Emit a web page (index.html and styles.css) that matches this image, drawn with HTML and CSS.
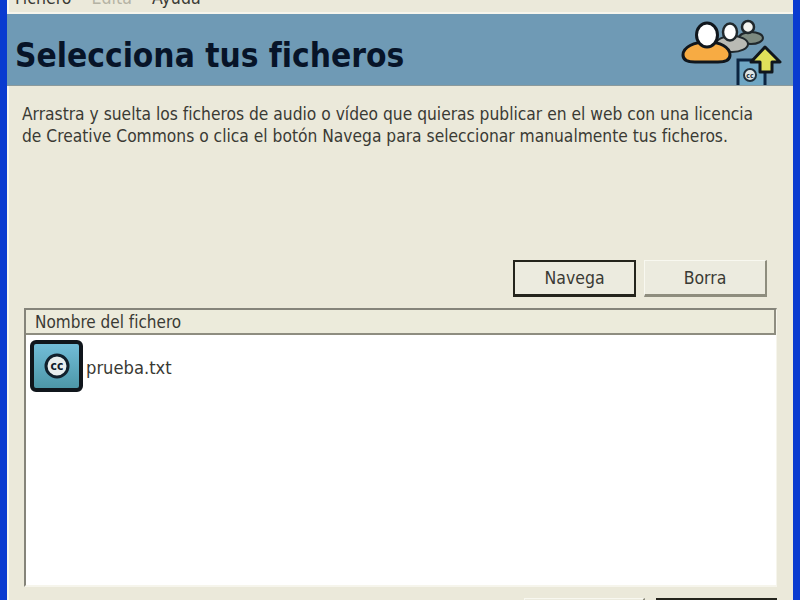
FILE: index.html
```html
<!DOCTYPE html>
<html lang="es">
<head>
  <meta charset="UTF-8">
  <meta name="viewport" content="width=device-width, initial-scale=1">
  <title>Selecciona tus ficheros</title>
  <link rel="stylesheet" href="styles.css">
</head>
<body>
  <div class="window">
    <nav class="menu">
      <span class="menu-item">Fichero</span>
      <span class="menu-item disabled">Edita</span>
      <span class="menu-item">Ayuda</span>
    </nav>
    <header class="banner">
      <h1>Selecciona tus ficheros</h1>
      <svg class="banner-icon" width="108" height="71" viewBox="0 0 108 71">
        <!-- back person -->
        <ellipse cx="73" cy="24" rx="12" ry="6" fill="#7d8a80" stroke="#20282c" stroke-width="2"/>
        <circle cx="70" cy="13" r="6" fill="#f4f4f0" stroke="#20282c" stroke-width="2.5"/>
        <!-- middle person -->
        <ellipse cx="54" cy="30" rx="16" ry="8" fill="#b9bab4" stroke="#20282c" stroke-width="2"/>
        <ellipse cx="52" cy="18" rx="7" ry="8.5" fill="#fff" stroke="#20282c" stroke-width="2.5"/>
        <!-- front person -->
        <path d="M5 41c0-8 11-13 24-13s23 5 23 13c0 6-6 7-12 7H17c-6 0-12-1-12-7z" fill="#f7ab43" stroke="#10161c" stroke-width="3"/>
        <ellipse cx="29" cy="21" rx="10.5" ry="12" fill="#fff" stroke="#10161c" stroke-width="3"/>
        <!-- document with cc mark -->
        <path d="M60 71V46h27v25" fill="#6fa7c4" stroke="#0c2440" stroke-width="3"/>
        <circle cx="72" cy="61" r="6" fill="#dfe6e6" stroke="#20303c" stroke-width="2"/>
        <text class="cc-small" x="72" y="63.5">cc</text>
        <!-- arrow -->
        <path d="M87 33l15 15H94v10H82V48H73z" fill="#dfe05a" stroke="#10161c" stroke-width="3" stroke-linejoin="round"/>
      </svg>
    </header>
    <main class="content">
      <p class="intro">Arrastra y suelta los ficheros de audio o vídeo que quieras publicar en el web con una licencia<br>de Creative Commons o clica el botón Navega para seleccionar manualmente tus ficheros.</p>
      <div class="actions">
        <button class="btn default">Navega</button>
        <button class="btn">Borra</button>
      </div>
      <section class="list">
        <div class="list-head">Nombre del fichero</div>
        <div class="list-body">
          <div class="file">
            <span class="file-icon">
              <svg width="30" height="30" viewBox="0 0 30 30">
                <circle cx="15" cy="15" r="11" fill="#e8eeee" stroke="#10202c" stroke-width="3"/>
                <text class="cc-big" x="15" y="19">cc</text>
              </svg>
            </span>
            <span class="file-name">prueba.txt</span>
          </div>
        </div>
      </section>
      <div class="footer-actions">
        <button class="btn low"></button>
        <button class="btn low default"></button>
      </div>
    </main>
  </div>
</body>
</html>
```

FILE: styles.css
```css
html, body { margin: 0; padding: 0; height: 100%; overflow: hidden; }
body { background: #0a3bd0; font-family: "DejaVu Sans Condensed", "DejaVu Sans", sans-serif; color: #3a3a34; }

.window { margin: 0 7px; height: 600px; background: #ebe9da; overflow: hidden; box-shadow: inset 2px 0 #f6f6ee; }

.menu { height: 12px; display: flex; align-items: flex-end; padding-left: 8px; gap: 20px; overflow: hidden; border-bottom: 2px solid #f6f5ec; font-size: 17.6px; line-height: 12px; }
.menu-item { position: relative; top: -8px; }
.menu-item.disabled { color: #b5b3a4; }

.banner { height: 71px; background: #6f9ab5; display: flex; align-items: center; justify-content: space-between; padding: 0 7px 0 8px; border-bottom: 1px solid #8b9a9c; }
.banner h1 { margin: 12px 0 0; font-size: 33.2px; font-weight: bold; color: #071428; line-height: 1; }
.banner-icon { align-self: flex-end; }
.cc-small { font-size: 7px; font-weight: bold; text-anchor: middle; fill: #20303c; }
.cc-big { font-size: 12px; font-weight: bold; text-anchor: middle; fill: #10202c; }

.content { padding: 17px 16px 0 15px; }
.intro { margin: 0; font-size: 17.25px; line-height: 22px; height: 157px; }

.actions { display: flex; justify-content: flex-end; gap: 8px; padding-right: 10px; }
.btn { width: 123px; height: 37px; background: #ecebdf; border: 1px solid #f8f8f0; border-right: 2px solid #8e8d7e; border-bottom: 3px solid #8e8d7e; font-family: inherit; font-size: 17.5px; color: #3a3a34; padding: 0; }
.btn.default { border: 2px solid #24241c; border-bottom-width: 3px; }

.list { margin: 11px 0 0 2px; height: 279px; box-sizing: border-box; display: flex; flex-direction: column; border-left: 2px solid #85847a; border-right: 1px solid #f6f5ec; border-bottom: 2px solid #f6f5ec; border-top: 2px solid #85847a; }
.list-head { height: 25px; box-sizing: border-box; background: #ecebdb; border-bottom: 2px solid #8e8d80; border-right: 2px solid #8e8d80; padding-left: 9px; font-size: 17px; line-height: 25px; }
.list-body { flex: 1; background: #fff; padding: 5px 4px; }

.file { display: flex; align-items: center; }
.file-icon { width: 53px; height: 52px; box-sizing: border-box; border: 4px solid #10161c; border-radius: 6px; background: linear-gradient(#72bdd8, #4d97a8); display: flex; align-items: center; justify-content: center; }
.file-name { font-size: 18.2px; margin: 2px 0 0 3px; }

.footer-actions { display: flex; justify-content: flex-end; gap: 11px; margin-top: 11px; }
.btn.low { width: 121px; }
```
